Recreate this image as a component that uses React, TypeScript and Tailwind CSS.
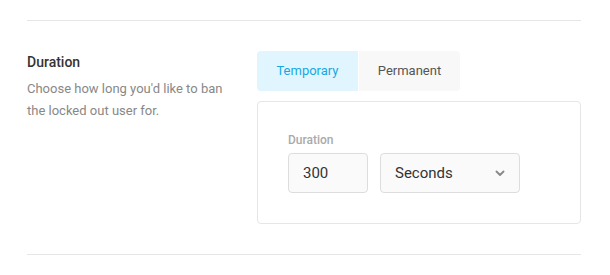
import { useState } from "react";

export default function App() {
  const [mode, setMode] = useState<"temporary" | "permanent">("temporary");
  const [amount, setAmount] = useState("300");
  const [unit, setUnit] = useState("Seconds");

  return (
    <div className="min-h-screen bg-white font-['Roboto',sans-serif]">
      <div className="mx-[27px] w-[554px] pt-5">
        <div className="flex border-y border-[#e6e6e6] py-[30px]">
          {/* Left: label */}
          <div className="w-[230px] shrink-0">
            <h3 className="text-[14px] leading-[22px] font-medium text-[#333]">Duration</h3>
            <p className="mt-[5px] max-w-[200px] text-[13px] leading-[22px] text-[#888]">
              Choose how long you'd like to ban the locked out user for.
            </p>
          </div>

          {/* Right: options */}
          <div className="flex-1">
            <div className="flex gap-px">
              <button
                onClick={() => setMode("temporary")}
                className={`h-10 w-[101px] rounded-l text-[13px] font-normal ${
                  mode === "temporary" ? "bg-[#e1f5fe] text-[#17a8e3]" : "bg-[#f8f8f8] text-[#555]"
                }`}
              >
                Temporary
              </button>
              <button
                onClick={() => setMode("permanent")}
                className={`h-10 w-[101px] rounded-r text-[13px] font-normal ${
                  mode === "permanent" ? "bg-[#e1f5fe] text-[#17a8e3]" : "bg-[#f8f8f8] text-[#555]"
                }`}
              >
                Permanent
              </button>
            </div>

            <div className="mt-2.5 rounded border border-[#e6e6e6] px-[30px] pt-[30px] pb-[30px]">
              <label className="block text-[12px] leading-[16px] font-medium text-[#aaa]">Duration</label>
              <div className="mt-[5px] flex gap-3">
                <input
                  value={amount}
                  onChange={(e) => setAmount(e.target.value)}
                  className="h-10 w-20 rounded border border-[#ddd] bg-[#fafafa] px-[14px] text-[15px] text-[#333] outline-none"
                />
                <div className="relative">
                  <select
                    value={unit}
                    onChange={(e) => setUnit(e.target.value)}
                    className="h-10 w-[140px] appearance-none rounded border border-[#ddd] bg-[#fafafa] px-[14px] text-[15px] text-[#333] outline-none"
                  >
                    <option>Seconds</option>
                    <option>Minutes</option>
                    <option>Hours</option>
                    <option>Days</option>
                  </select>
                  <svg
                    className="pointer-events-none absolute right-[15px] top-[17px]"
                    width="10"
                    height="6"
                    viewBox="0 0 10 6"
                  >
                    <path d="M1.5 1.5l3.5 3.5 3.5-3.5" fill="none" stroke="#888" strokeWidth="1.8" strokeLinecap="round" strokeLinejoin="round" />
                  </svg>
                </div>
              </div>
            </div>
          </div>
        </div>
      </div>
    </div>
  );
}
